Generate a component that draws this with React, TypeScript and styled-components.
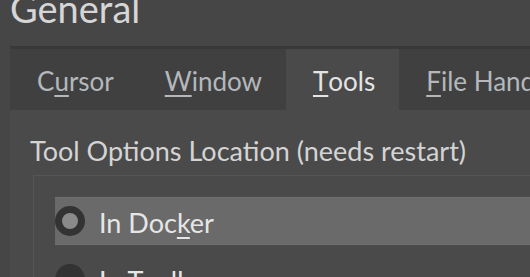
import React from "react";
import styled, { createGlobalStyle } from "styled-components";

const Global = createGlobalStyle`
  html, body { margin: 0; padding: 0; background: #464646; overflow: hidden; }
  body { font-family: "Lato", "Noto Sans", sans-serif; }
`;

const Page = styled.div`
  width: 530px;
  height: 277px;
  display: flex;
  flex-direction: column;
  overflow: hidden;
`;

const Title = styled.div`
  height: 58px;
  margin-top: -12px;
  padding-left: 10px;
  font-size: 38px;
  line-height: 40px;
  color: #d6d6d6;
  white-space: nowrap;
  flex: none;
  box-sizing: border-box;
`;

const Body = styled.div`
  margin-left: 10px;
  display: flex;
  flex-direction: column;
  flex: 1;
  min-height: 0;
`;

const TabBar = styled.div`
  height: 64px;
  display: flex;
  align-items: stretch;
  background: #404040;
  border-top: 3px solid #393939;
  box-sizing: border-box;
  flex: none;
  white-space: nowrap;
`;

const Tab = styled.div<{ $active?: boolean }>`
  padding: 3px 24px 0 27px;
  display: flex;
  align-items: center;
  font-size: 26px;
  color: ${(p) => (p.$active ? "#e4e4e4" : "#b4b8bc")};
  background: ${(p) => (p.$active ? "#4a4a4a" : "transparent")};
  flex: none;
`;

const Mn = styled.span`
  text-decoration: underline;
  text-underline-offset: 4px;
  text-decoration-thickness: 2px;
`;

const Panel = styled.div`
  flex: 1;
  background: #4a4a4a;
  padding: 25px 0 0 20px;
  display: flex;
  flex-direction: column;
`;

const Label = styled.div`
  font-size: 27px;
  line-height: 32px;
  color: #d4d4d4;
  white-space: nowrap;
`;

const Group = styled.div`
  margin-top: 8px;
  margin-left: 3px;
  border-top: 1px solid #555555;
  border-left: 1px solid #555555;
  padding: 21px 0 0 21px;
  display: flex;
  flex-direction: column;
  gap: 10px;
  flex: 1;
`;

const Option = styled.div<{ $selected?: boolean }>`
  height: 48px;
  flex: none;
  display: flex;
  align-items: center;
  gap: 14px;
  background: ${(p) => (p.$selected ? "#6a6a6a" : "transparent")};
  border-top: 1px solid ${(p) => (p.$selected ? "#707070" : "transparent")};
  border-bottom: 1px solid ${(p) => (p.$selected ? "#707070" : "transparent")};
  box-sizing: border-box;
  font-size: 27px;
  color: #e6e6e6;
  white-space: nowrap;
`;

const OptionText = styled.span`
  padding-top: 2px;
`;

const Radio = styled.span<{ $checked?: boolean }>`
  width: 30px;
  height: 30px;
  border-radius: 50%;
  box-sizing: border-box;
  border: 7px solid #333333;
  background: ${(p) => (p.$checked ? "#8a8a8a" : "#333333")};
  flex: none;
`;

export default function App() {
  return (
    <Page>
      <Global />
      <Title>General</Title>
      <Body>
        <TabBar>
          <Tab>
            C<Mn>u</Mn>rsor
          </Tab>
          <Tab>
            <Mn>W</Mn>indow
          </Tab>
          <Tab $active>
            <Mn>T</Mn>ools
          </Tab>
          <Tab>
            <Mn>F</Mn>ile Handling
          </Tab>
        </TabBar>
        <Panel>
          <Label>Tool Options Location (needs restart)</Label>
          <Group>
            <Option $selected>
              <Radio $checked />
              <OptionText>
                In Doc<Mn>k</Mn>er
              </OptionText>
            </Option>
            <Option>
              <Radio />
              <OptionText>In Toolbar</OptionText>
            </Option>
          </Group>
        </Panel>
      </Body>
    </Page>
  );
}
